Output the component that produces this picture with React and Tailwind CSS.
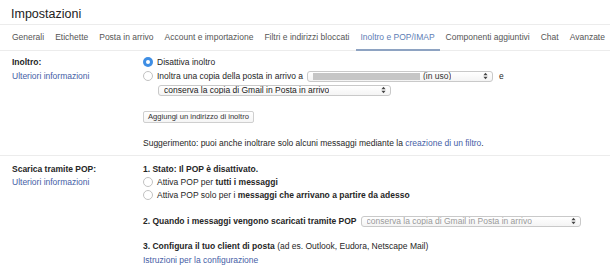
import React from "react";

const tabs = [
  "Generali",
  "Etichette",
  "Posta in arrivo",
  "Account e importazione",
  "Filtri e indirizzi bloccati",
  "Inoltro e POP/IMAP",
  "Componenti aggiuntivi",
  "Chat",
  "Avanzate",
];

// mac-style up/down select arrows
function Arrows() {
  return (
    <svg viewBox="0 0 6 9" width="5" height="8" className="shrink-0">
      <path d="M3 0.5 L5.5 3.5 L0.5 3.5 Z" fill="#444" />
      <path d="M3 8.5 L5.5 5.5 L0.5 5.5 Z" fill="#444" />
    </svg>
  );
}

function Radio({ checked }) {
  if (checked) {
    return (
      <span className="w-[10px] h-[10px] rounded-full bg-[#3f8ee4] flex items-center justify-center shrink-0">
        <span className="w-[4px] h-[4px] rounded-full bg-white" />
      </span>
    );
  }
  return <span className="w-[10px] h-[10px] rounded-full border border-[#c2c2c2] bg-white shrink-0" />;
}

function Select({ className, children, disabled }) {
  return (
    <div
      className={`h-[11px] flex items-center justify-between pl-[5px] pr-[4px] rounded-[3px] border border-[#c9c9c9] bg-gradient-to-b from-white to-[#f4f4f4] ${
        disabled ? "text-[#9a9a9a]" : "text-[#222]"
      } ${className}`}
    >
      <div className="flex items-center gap-[3px] whitespace-nowrap overflow-hidden">{children}</div>
      <Arrows />
    </div>
  );
}

export default function App() {
  return (
    <div className="w-[610px] h-[271px] overflow-hidden bg-white text-[#262626] text-[8.5px] leading-none font-['Liberation_Sans',Arial,sans-serif]">
      {/* Title */}
      <div className="h-[24px] pl-[11px] pt-[8px] text-[12.5px] text-[#222]">Impostazioni</div>

      {/* Tabs */}
      <div className="h-[27px] border-y border-[#ececec] flex pl-[12px] gap-[11px] text-[8.5px] text-[#555]">
        {tabs.map((t) => (
          <div
            key={t}
            className={`relative flex items-center whitespace-nowrap ${
              t === "Inoltro e POP/IMAP" ? "text-[#5d7db5]" : ""
            }`}
          >
            {t}
            {t === "Inoltro e POP/IMAP" && (
              <span className="absolute left-[-4px] right-[-5px] bottom-[-1px] h-[2px] bg-[#8ea3c2]" />
            )}
          </div>
        ))}
      </div>

      {/* Inoltro */}
      <div className="flex border-b border-[#ececec] pt-[4px] pb-[5px]">
        <div className="w-[143px] pl-[12px] shrink-0">
          <div className="h-[14px] flex items-center font-bold">Inoltro:</div>
          <div className="h-[14px] flex items-center text-[#4560a6]">Ulteriori informazioni</div>
        </div>
        <div className="flex-1">
          <div className="h-[14px] flex items-center gap-[4px]">
            <Radio checked />
            <span>Disattiva inoltro</span>
          </div>
          <div className="h-[14px] flex items-center gap-[4px]">
            <Radio />
            <span className="whitespace-nowrap">Inoltra una copia della posta in arrivo a</span>
            <Select className="w-[186px] pl-[3px]">
              <span className="w-[107px] h-[7px] bg-[#c6c6c6]" />
              <span className="text-[#333]">(in uso)</span>
            </Select>
            <span className="ml-[2px]">e</span>
          </div>
          <div className="h-[14px] flex items-center pl-[15px]">
            <Select className="w-[233px]">conserva la copia di Gmail in Posta in arrivo</Select>
          </div>
          <div className="mt-[14px] flex">
            <div className="h-[12px] px-[4px] flex items-center border border-[#cfcfcf] rounded-[2px] bg-gradient-to-b from-white to-[#f5f5f5] text-[7.6px] text-[#333]">
              Aggiungi un indirizzo di inoltro
            </div>
          </div>
          <div className="mt-[13px] h-[14px] flex items-center whitespace-nowrap">
            Suggerimento: puoi anche inoltrare solo alcuni messaggi mediante la&nbsp;
            <span className="text-[#4560a6]">creazione di un filtro</span>.
          </div>
        </div>
      </div>

      {/* POP */}
      <div className="flex pt-[7px]">
        <div className="w-[143px] pl-[12px] shrink-0">
          <div className="h-[13px] flex items-center font-bold">Scarica tramite POP:</div>
          <div className="h-[12px] flex items-center text-[#4560a6]">Ulteriori informazioni</div>
        </div>
        <div className="flex-1">
          <div className="h-[13px] flex items-center font-bold">1. Stato: Il POP è disattivato.</div>
          <div className="h-[12.5px] flex items-center gap-[4px]">
            <Radio />
            <span>
              Attiva POP per <b>tutti i messaggi</b>
            </span>
          </div>
          <div className="h-[12.5px] flex items-center gap-[4px]">
            <Radio />
            <span>
              Attiva POP solo per i <b>messaggi che arrivano a partire da adesso</b>
            </span>
          </div>
          <div className="mt-[13px] h-[14px] flex items-center gap-[4px]">
            <span className="font-bold whitespace-nowrap">2. Quando i messaggi vengono scaricati tramite POP</span>
            <Select className="w-[220px]" disabled>
              conserva la copia di Gmail in Posta in arrivo
            </Select>
          </div>
          <div className="mt-[11px] h-[14px] flex items-center whitespace-nowrap">
            <b>3. Configura il tuo client di posta</b>&nbsp;(ad es. Outlook, Eudora, Netscape Mail)
          </div>
          <div className="h-[14px] flex items-center text-[#4560a6]">Istruzioni per la configurazione</div>
        </div>
      </div>
    </div>
  );
}
